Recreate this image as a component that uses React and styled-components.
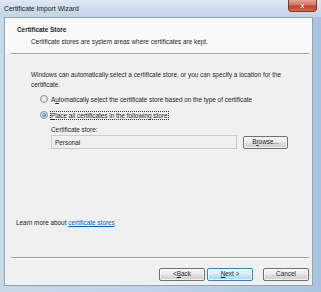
import styled, { createGlobalStyle } from "styled-components";

const Global = createGlobalStyle`
  html, body { margin: 0; padding: 0; }
  body {
    width: 321px;
    height: 292px;
    overflow: hidden;
    font-family: "Liberation Sans", Arial, sans-serif;
    font-size: 6.4px;
    color: #1e1e1e;
  }
  u { text-decoration: underline; text-underline-offset: 1px; }
`;

const Window = styled.div`
  width: 321px;
  height: 292px;
  display: flex;
  flex-direction: column;
  background: linear-gradient(90deg, #c9d9ea 0%, #bcd1e8 55%, #a9c3df 100%);
`;

const TitleBar = styled.div`
  height: 17px;
  display: flex;
  align-items: flex-start;
  justify-content: space-between;
  padding-left: 4px;
  background: linear-gradient(180deg, #dfe8f2 0%, #cddbea 60%, #c2d4e8 100%);
`;

const Title = styled.div`
  font-size: 6.8px;
  line-height: 10px;
  padding-top: 4px;
  color: #1a1a1a;
`;

const CloseBtn = styled.div`
  width: 29px;
  height: 12px;
  margin-right: 4px;
  box-sizing: border-box;
  border: 1px solid #7a3a30;
  border-top: none;
  border-radius: 0 0 4px 4px;
  background: linear-gradient(180deg, #e8a595 0%, #d4705c 45%, #c0412c 55%, #d06a4c 100%);
  display: flex;
  align-items: center;
  justify-content: center;
  color: #fff;
  font-size: 7px;
  font-weight: bold;
  text-shadow: 0 0 1px #5a1a10;
`;

const Frame = styled.div`
  flex: 1;
  display: flex;
  padding: 0 8px 6px 4px;
`;

const Client = styled.div`
  flex: 1;
  display: flex;
  flex-direction: column;
  background: #f0f0f0;
  border: 1px solid #8ea4bd;
`;

const Header = styled.div`
  height: 35px;
  box-sizing: border-box;
  padding: 7px 0 0 12px;
  background: #fafafa;
`;

const HeaderTitle = styled.div`
  font-weight: bold;
  line-height: 10px;
`;

const HeaderSub = styled.div`
  line-height: 10px;
  margin-top: 2px;
  padding-left: 14px;
`;

const Rule = styled.div`
  height: 1px;
  margin: 0 3px 0 6px;
  background: #a0a0a0;
  border-bottom: 1px solid #ffffff;
`;

const Body = styled.div`
  flex: 1;
  display: flex;
  flex-direction: column;
  padding: 15px 0 0 26px;
`;

const Para = styled.div`
  line-height: 9.5px;
  width: 270px;
`;

const Options = styled.div`
  display: flex;
  flex-direction: column;
  gap: 6px;
  margin-top: 5px;
  padding-left: 9px;
`;

const Option = styled.div`
  display: flex;
  align-items: center;
  gap: 2px;
  height: 10px;
`;

const Radio = styled.span`
  width: 8px;
  height: 8px;
  box-sizing: border-box;
  border-radius: 50%;
  border: 1px solid #8c8f94;
  background: radial-gradient(circle, #f4f4f4 0%, #dcdcdc 100%);
  display: flex;
  align-items: center;
  justify-content: center;

  &::after {
    content: "";
    width: 4px;
    height: 4px;
    border-radius: 50%;
    background: ${({ $on }) => ($on ? "radial-gradient(circle at 35% 35%, #8fd0f7, #1a6fb8)" : "transparent")};
  }
`;

const OptionLabel = styled.span`
  line-height: 9px;
  padding: 0 1px;
  outline: ${({ $focus }) => ($focus ? "1px dotted #333" : "none")};
  outline-offset: -1px;
`;

const StoreBox = styled.div`
  margin-top: 5px;
  padding-left: 20px;
`;

const StoreLabel = styled.div`
  line-height: 10px;
`;

const StoreRow = styled.div`
  display: flex;
  align-items: center;
  gap: 6px;
`;

const TextBox = styled.div`
  width: 186px;
  height: 14px;
  box-sizing: border-box;
  border: 1px solid #c9ccd1;
  background: #f0f0f0;
  padding: 0 3px;
  display: flex;
  align-items: center;
`;

const Button = styled.div`
  width: ${({ $w }) => $w || 46}px;
  height: 13px;
  box-sizing: border-box;
  border-radius: 2px;
  border: 1px solid ${({ $def }) => ($def ? "#3c7fb1" : "#707070")};
  background: ${({ $def }) =>
    $def
      ? "linear-gradient(180deg, #eaf6fd 0%, #d9f0fc 48%, #bee6fd 52%, #a7d9f5 100%)"
      : "linear-gradient(180deg, #f2f2f2 0%, #ebebeb 48%, #dddddd 52%, #cfcfcf 100%)"};
  box-shadow: inset 0 0 0 1px rgba(255, 255, 255, 0.7);
  display: flex;
  align-items: center;
  justify-content: center;
  line-height: 1;
`;

const Learn = styled.div`
  margin-top: auto;
  margin-bottom: 29px;
  margin-left: -15px;
  line-height: 10px;
`;

const Link = styled.span`
  color: #0066cc;
  text-decoration: underline;
`;

const Footer = styled.div`
  display: flex;
  justify-content: flex-end;
  gap: 2px;
  padding: 9px 3px 4px 0;
`;

const Spacer = styled.div`
  width: 6px;
`;

export default function App() {
  return (
    <>
      <Global />
      <Window>
        <TitleBar>
          <Title>Certificate Import Wizard</Title>
          <CloseBtn>x</CloseBtn>
        </TitleBar>
        <Frame>
          <Client>
            <Header>
              <HeaderTitle>Certificate Store</HeaderTitle>
              <HeaderSub>Certificate stores are system areas where certificates are kept.</HeaderSub>
            </Header>
            <Rule />
            <Body>
              <Para>
                Windows can automatically select a certificate store, or you can specify a location for
                the certificate.
              </Para>
              <Options>
                <Option>
                  <Radio />
                  <OptionLabel>
                    A<u>u</u>tomatically select the certificate store based on the type of certificate
                  </OptionLabel>
                </Option>
                <Option>
                  <Radio $on />
                  <OptionLabel $focus>
                    <u>P</u>lace all certificates in the following store
                  </OptionLabel>
                </Option>
              </Options>
              <StoreBox>
                <StoreLabel>Certificate store:</StoreLabel>
                <StoreRow>
                  <TextBox>Personal</TextBox>
                  <Button $w={45}>
                    B<u>r</u>owse...
                  </Button>
                </StoreRow>
              </StoreBox>
              <Learn>
                Learn more about <Link>certificate stores</Link>
              </Learn>
            </Body>
            <Rule />
            <Footer>
              <Button>
                &lt; <u>B</u>ack
              </Button>
              <Button $def>
                <u>N</u>ext &gt;
              </Button>
              <Spacer />
              <Button>Cancel</Button>
            </Footer>
          </Client>
        </Frame>
      </Window>
    </>
  );
}
